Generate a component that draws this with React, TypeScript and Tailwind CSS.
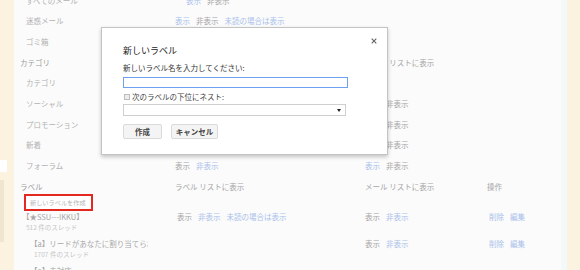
import type { ReactNode } from 'react'

type Seg = [string, 'b' | 'g']

const tone = { b: 'text-[#a9c1ea]', g: 'text-[#a6a6a6]' }

function Links({ items, className = '' }: { items?: Seg[]; className?: string }) {
  if (!items) return null
  return (
    <div className={`flex gap-[6px] ${className}`}>
      {items.map(([t, c]) => (
        <span key={t} className={tone[c]}>
          {t}
        </span>
      ))}
    </div>
  )
}

function Row({
  name,
  header,
  c2,
  c3,
  c4,
  c2Class = '',
}: {
  name: string
  header?: boolean
  c2?: Seg[]
  c3?: Seg[]
  c4?: Seg[]
  c2Class?: string
}) {
  return (
    <div className="flex h-[20.7px] items-center leading-none">
      <div
        className={
          header
            ? 'w-[161px] shrink-0 pl-[6px] text-[#9c9c9c]'
            : 'w-[161px] shrink-0 pl-[12px] text-[#b2b2b2]'
        }
      >
        {name}
      </div>
      <div className="w-[190px] shrink-0">
        <Links items={c2} className={c2Class} />
      </div>
      <div className="w-[122px] shrink-0">
        <Links items={c3} />
      </div>
      <div className="flex-1">
        <Links items={c4} />
      </div>
    </div>
  )
}

function LabelItem({
  name,
  count,
  nested,
  c2,
  c3,
  c4,
}: {
  name: string
  count: string
  nested?: boolean
  c2?: Seg[]
  c3?: Seg[]
  c4?: Seg[]
}) {
  return (
    <div className="flex h-[27px] leading-none">
      <div className={nested ? 'w-[161px] shrink-0 pl-[16px]' : 'w-[161px] shrink-0 pl-[8px]'}>
        <div className="flex h-[12px] w-[118px] items-center overflow-hidden whitespace-nowrap text-[#a8a8a8]">
          {name}
        </div>
        <div className="flex h-[8px] items-center pl-[4px] text-[6.5px] text-[#c6c6c6]">{count}</div>
      </div>
      <div className="flex h-[12px] w-[190px] shrink-0 items-center pl-[2px]">
        <Links items={c2} />
      </div>
      <div className="flex h-[12px] w-[122px] shrink-0 items-center">
        <Links items={c3} />
      </div>
      <div className="flex h-[12px] flex-1 items-center pl-[2px]">
        <Links items={c4} />
      </div>
    </div>
  )
}

function Button({ children, w }: { children: ReactNode; w: string }) {
  return (
    <div
      className={`${w} flex h-[15px] items-center justify-center rounded-[2px] border border-[#dadada] bg-[#f4f4f4] text-[7.5px] font-bold text-[#444]`}
    >
      {children}
    </div>
  )
}

export default function App() {
  return (
    <div className="relative flex h-[270px] w-[580px] overflow-hidden bg-[#fbfbfb] font-['Noto_Sans_CJK_JP','Liberation_Sans',sans-serif] text-[7.5px]">
      {/* left edge */}
      <div className="flex w-[14px] shrink-0 flex-col bg-[#fbf3df]">
        <div className="h-[160px]" />
        <div className="h-[12px] w-[7px] bg-white" />
        <div className="h-[8px]" />
        <div className="h-[62px] w-[4px] bg-[#efe6d0]" />
      </div>

      {/* settings table */}
      <div className="w-[547px] shrink-0">
        <div className="-mt-[10px]">
          <Row name="すべてのメール" c2={[['表示', 'b'], ['非表示', 'g']]} c2Class="pl-[11px]" />
          <Row
            name="迷惑メール"
            c2={[['表示', 'b'], ['非表示', 'g'], ['未読の場合は表示', 'b']]}
          />
          <Row name="ゴミ箱" />
          <Row name="カテゴリ" header c3={[['メール リストに表示', 'g']]} />
          <Row name="カテゴリ" />
          <Row name="ソーシャル" c3={[['表示', 'b'], ['非表示', 'g']]} />
          <Row name="プロモーション" c3={[['表示', 'b'], ['非表示', 'g']]} />
          <Row name="新着" c3={[['表示', 'b'], ['非表示', 'g']]} />
          <Row
            name="フォーラム"
            c2={[['表示', 'g'], ['非表示', 'b']]}
            c3={[['表示', 'b'], ['非表示', 'g']]}
          />
        </div>

        <div className="mt-[4px] flex h-[14px] items-center leading-none">
          <div className="w-[161px] shrink-0 pl-[6px] text-[#9c9c9c]">ラベル</div>
          <div className="w-[190px] shrink-0 text-[#a6a6a6]">ラベル リストに表示</div>
          <div className="w-[122px] shrink-0 text-[#a6a6a6]">メール リストに表示</div>
          <div className="flex-1 text-[#a6a6a6]">操作</div>
        </div>

        <div className="ml-[10px] flex h-[17px] w-[69px] items-center border-2 border-[#e4281f] bg-white pl-[4px] text-[6.2px] leading-none text-[#b6b6b6]">
          新しいラベルを作成
        </div>

        <LabelItem
          name="【★SSU---IKKU】"
          count="512 件のスレッド"
          c2={[['表示', 'g'], ['非表示', 'b'], ['未読の場合は表示', 'b']]}
          c3={[['表示', 'g'], ['非表示', 'b']]}
          c4={[['削除', 'b'], ['編集', 'b']]}
        />
        <LabelItem
          name="【a】リードがあなたに割り当てられました"
          count="1707 件のスレッド"
          nested
          c3={[['表示', 'g'], ['非表示', 'b']]}
          c4={[['削除', 'b'], ['編集', 'b']]}
        />
        <LabelItem name="【a】未対応" count="88 件のスレッド" nested />
      </div>

      {/* right edge */}
      <div className="w-[6px] shrink-0 bg-[#f5f8f9]" />
      <div className="flex-1 bg-[#fbf3df]" />

      {/* dialog */}
      <div className="absolute left-[101px] top-[27px] h-[128px] w-[287px] border border-[#c4c4c4] bg-white pl-[21px] text-[#333] shadow-[0_2px_4px_rgba(0,0,0,0.22)]">
        <svg
          className="absolute right-[10px] top-[10px]"
          width="6"
          height="6"
          viewBox="0 0 6 6"
        >
          <path d="M0.7 0.7 L5.3 5.3 M5.3 0.7 L0.7 5.3" stroke="#666" strokeWidth="1.2" />
        </svg>
        <div className="mt-[16px] flex h-[12px] items-center text-[9px] leading-none text-[#222]">
          新しいラベル
        </div>
        <div className="mt-[7px] flex h-[10px] items-center leading-none">
          新しいラベル名を入力してください:
        </div>
        <div className="mt-[4px] h-[11px] w-[225px] border border-[#6f9ff0] bg-white" />
        <div className="mt-[4px] flex h-[10px] items-center gap-[2px] leading-none text-[#444]">
          <div className="ml-[1px] h-[6px] w-[6px] border border-[#bdbdbd] bg-[#ececec]" />
          <span>次のラベルの下位にネスト:</span>
        </div>
        <div className="mt-[2px] flex h-[12px] w-[223px] items-center justify-end border border-[#cfcfcf] bg-white pr-[4px]">
          <svg width="4" height="3" viewBox="0 0 4 3">
            <path d="M0 0 H4 L2 3 Z" fill="#222" />
          </svg>
        </div>
        <div className="mt-[8px] flex gap-[9px]">
          <Button w="w-[39px]">作成</Button>
          <Button w="w-[47px]">キャンセル</Button>
        </div>
      </div>
    </div>
  )
}
